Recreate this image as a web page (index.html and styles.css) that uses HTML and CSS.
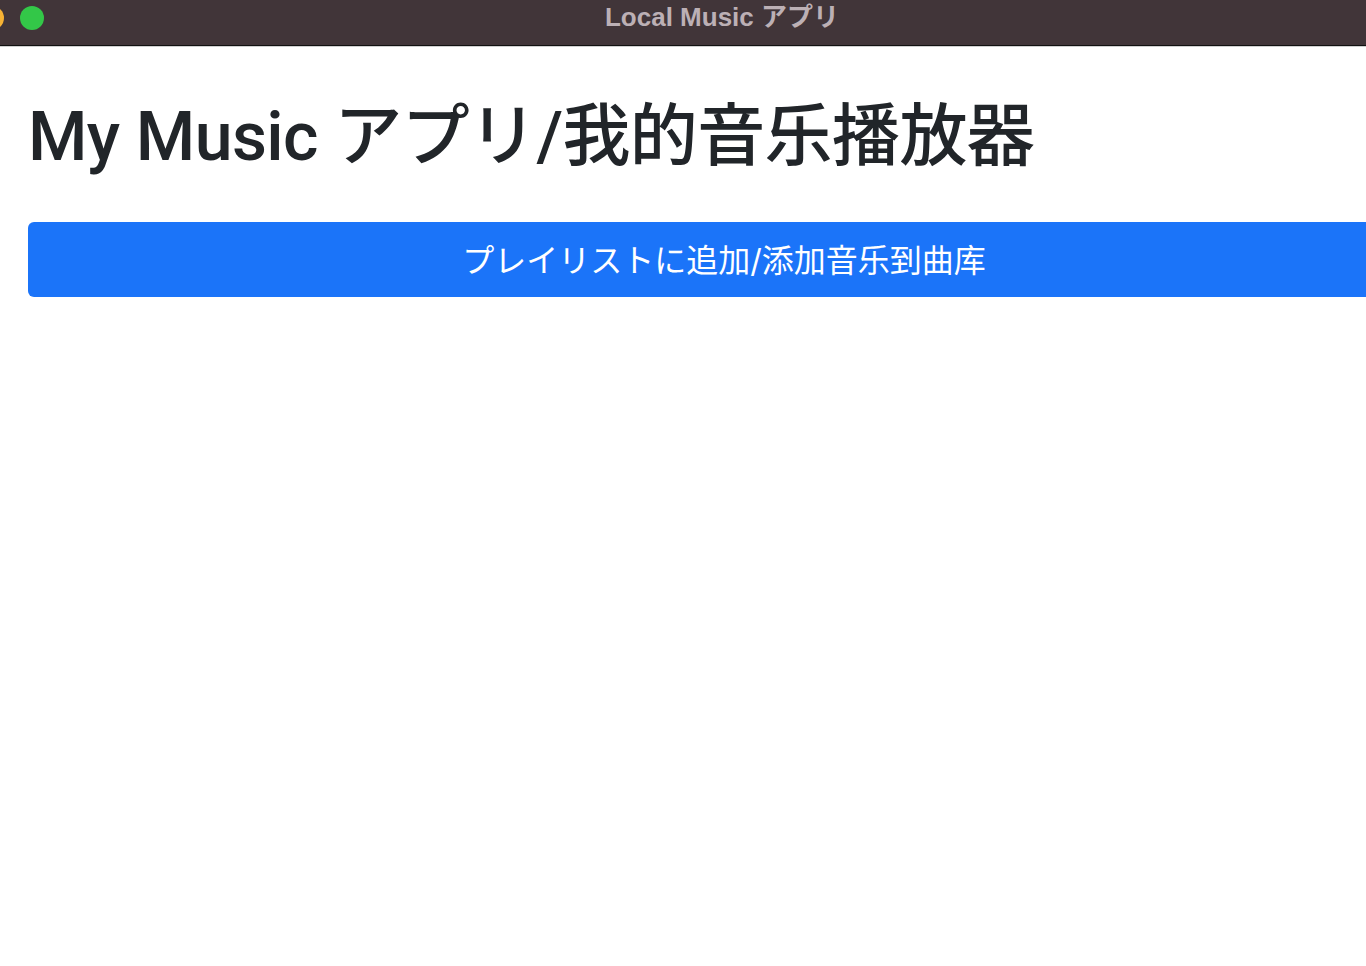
FILE: index.html
```html
<!DOCTYPE html>
<html lang="ja">
<head>
<meta charset="utf-8">
<title>Local Music アプリ</title>
<link rel="stylesheet" href="styles.css">
</head>
<body>
<div class="titlebar">
  <span class="light light-yellow"></span>
  <span class="light light-green"></span>
  <div class="title">Local Music アプリ</div>
</div>
<main class="content">
  <h1 class="heading">My Music アプリ/我的音乐播放器</h1>
  <button class="btn-add">プレイリストに追加/添加音乐到曲库</button>
</main>
</body>
</html>
```

FILE: styles.css
```css
html, body {
  margin: 0;
  padding: 0;
  background: #ffffff;
  overflow: hidden;
  width: 1366px;
  height: 966px;
}

body {
  font-family: "Liberation Sans", "Noto Sans CJK SC", "Noto Sans CJK JP", sans-serif;
}

.titlebar {
  position: relative;
  height: 45px;
  background: #413539;
  border-bottom: 1px solid #111111;
  box-shadow: 0 1px 0 #d0d0d0;
}

.light {
  position: absolute;
  top: 6px;
  width: 24px;
  height: 24px;
  border-radius: 50%;
}

.light-yellow {
  left: -20px;
  background: #f6b234;
}

.light-green {
  left: 20px;
  background: #33c748;
}

.title {
  text-align: center;
  padding-left: 78px;
  padding-top: 2px;
  line-height: 30px;
  font-size: 26px;
  font-weight: bold;
  color: #bcb0b5;
}

.content {
  width: 1392px;
  padding: 0 0 0 28px;
}

.heading {
  margin: 51px 0 0 0;
  font-family: "Roboto", "Noto Sans CJK SC", "Noto Sans CJK JP", sans-serif;
  font-size: 68px;
  line-height: 80px;
  font-weight: 500;
  letter-spacing: -0.6px;
  color: #212529;
}

.btn-add {
  display: block;
  width: 100%;
  height: 75px;
  margin-top: 45px;
  border: none;
  border-radius: 6px;
  background: #1b74f9;
  color: #ffffff;
  font-family: "Inter", "Noto Sans CJK SC", "Noto Sans CJK JP", sans-serif;
  font-size: 32px;
  padding: 0 0 4px 0;
}
```
